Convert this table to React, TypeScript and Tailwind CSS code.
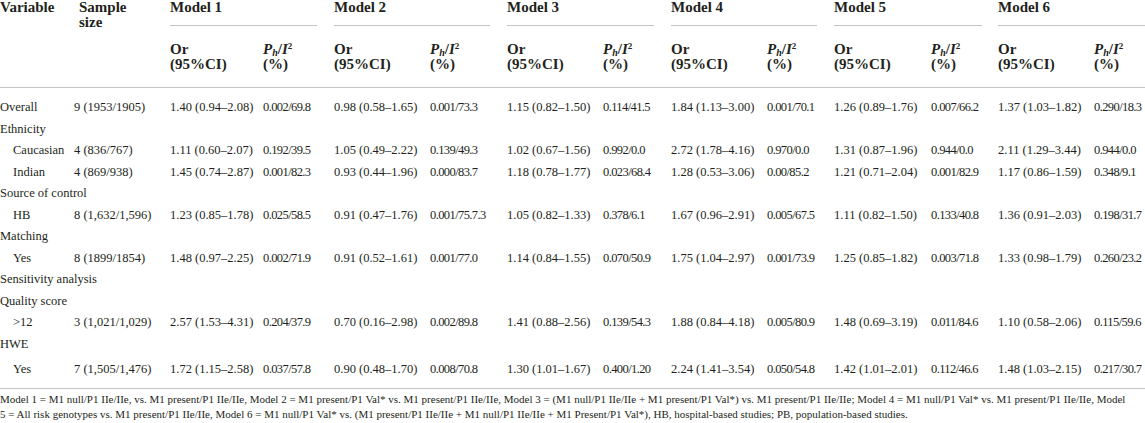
import React from 'react'

const cols = 'grid grid-cols-[74px_96px_93px_71px_96px_77px_96px_68px_96px_67px_97px_67px_96px_51px]'

type Row = {
  label: string
  indent?: boolean
  size?: string
  vals?: string[]
}

const rows: Row[] = [
  {
    label: 'Overall',
    size: '9 (1953/1905)',
    vals: ['1.40 (0.94–2.08)', '0.002/69.8', '0.98 (0.58–1.65)', '0.001/73.3', '1.15 (0.82–1.50)', '0.114/41.5', '1.84 (1.13–3.00)', '0.001/70.1', '1.26 (0.89–1.76)', '0.007/66.2', '1.37 (1.03–1.82)', '0.290/18.3'],
  },
  { label: 'Ethnicity' },
  {
    label: 'Caucasian',
    indent: true,
    size: '4 (836/767)',
    vals: ['1.11 (0.60–2.07)', '0.192/39.5', '1.05 (0.49–2.22)', '0.139/49.3', '1.02 (0.67–1.56)', '0.992/0.0', '2.72 (1.78–4.16)', '0.970/0.0', '1.31 (0.87–1.96)', '0.944/0.0', '2.11 (1.29–3.44)', '0.944/0.0'],
  },
  {
    label: 'Indian',
    indent: true,
    size: '4 (869/938)',
    vals: ['1.45 (0.74–2.87)', '0.001/82.3', '0.93 (0.44–1.96)', '0.000/83.7', '1.18 (0.78–1.77)', '0.023/68.4', '1.28 (0.53–3.06)', '0.00/85.2', '1.21 (0.71–2.04)', '0.001/82.9', '1.17 (0.86–1.59)', '0.348/9.1'],
  },
  { label: 'Source of control' },
  {
    label: 'HB',
    indent: true,
    size: '8 (1,632/1,596)',
    vals: ['1.23 (0.85–1.78)', '0.025/58.5', '0.91 (0.47–1.76)', '0.001/75.7.3', '1.05 (0.82–1.33)', '0.378/6.1', '1.67 (0.96–2.91)', '0.005/67.5', '1.11 (0.82–1.50)', '0.133/40.8', '1.36 (0.91–2.03)', '0.198/31.7'],
  },
  { label: 'Matching' },
  {
    label: 'Yes',
    indent: true,
    size: '8 (1899/1854)',
    vals: ['1.48 (0.97–2.25)', '0.002/71.9', '0.91 (0.52–1.61)', '0.001/77.0', '1.14 (0.84–1.55)', '0.070/50.9', '1.75 (1.04–2.97)', '0.001/73.9', '1.25 (0.85–1.82)', '0.003/71.8', '1.33 (0.98–1.79)', '0.260/23.2'],
  },
  { label: 'Sensitivity analysis' },
  { label: 'Quality score' },
  {
    label: '>12',
    indent: true,
    size: '3 (1,021/1,029)',
    vals: ['2.57 (1.53–4.31)', '0.204/37.9', '0.70 (0.16–2.98)', '0.002/89.8', '1.41 (0.88–2.56)', '0.139/54.3', '1.88 (0.84–4.18)', '0.005/80.9', '1.48 (0.69–3.19)', '0.011/84.6', '1.10 (0.58–2.06)', '0.115/59.6'],
  },
  { label: 'HWE' },
]

const lastRow: Row = {
  label: 'Yes',
  indent: true,
  size: '7 (1,505/1,476)',
  vals: ['1.72 (1.15–2.58)', '0.037/57.8', '0.90 (0.48–1.70)', '0.008/70.8', '1.30 (1.01–1.67)', '0.400/1.20', '2.24 (1.41–3.54)', '0.050/54.8', '1.42 (1.01–2.01)', '0.112/46.6', '1.48 (1.03–2.15)', '0.217/30.7'],
}

const models = [
  { name: 'Model 1', line: 'mr-[17px]' },
  { name: 'Model 2', line: 'mr-[17px]' },
  { name: 'Model 3', line: 'mr-[17px]' },
  { name: 'Model 4', line: 'mr-[17px]' },
  { name: 'Model 5', line: 'mr-[16px]' },
  { name: 'Model 6', line: '' },
]

function DataRow({ row, className = '' }: { row: Row; className?: string }) {
  if (!row.vals) {
    return (
      <div className={`h-[21.5px] leading-[21.5px] whitespace-nowrap ${className}`}>{row.label}</div>
    )
  }
  return (
    <div className={`${cols} h-[21.5px] leading-[21.5px] whitespace-nowrap ${className}`}>
      <div className={row.indent ? 'pl-[13px]' : ''}>{row.label}</div>
      <div>{row.size}</div>
      {row.vals.map((v, i) => (
        // Ph/I2 values sit a little tighter in the source face
        <div key={i} className={i % 2 === 1 ? 'tracking-[-0.6px]' : ''}>
          {v}
        </div>
      ))}
    </div>
  )
}

// P_h / I^2 header, kept on one line with small raised/lowered glyphs
function PhHeader() {
  return (
    <>
      <div className="whitespace-nowrap">
        <i>P</i>
        <span className="relative top-[2px] text-[10px] leading-none italic">h</span>/<i>I</i>
        <span className="relative -top-[5px] text-[9px] leading-none">2</span>
      </div>
      <div>(%)</div>
    </>
  )
}

export default function App() {
  return (
    <div className="w-[1145px] bg-white font-['Liberation_Serif','Times_New_Roman',serif] text-[#231f20]">
      {/* header */}
      <div className={`${cols} grid-rows-[27px_60px] border-b border-[#c4c4c4] text-[15px] font-bold leading-[15px]`}>
        <div className="row-span-2">Variable</div>
        <div className="row-span-2 pl-[5px]">
          Sample
          <br />
          size
        </div>
        {models.map((m) => (
          <div key={m.name} className="col-span-2">
            <div className={`h-[26px] border-b border-[#c4c4c4] ${m.line}`}>{m.name}</div>
          </div>
        ))}
        {models.map((m) => (
          <React.Fragment key={m.name}>
            <div className="pt-[15px]">
              Or
              <br />
              (95%CI)
            </div>
            <div className="pt-[15px]">
              <PhHeader />
            </div>
          </React.Fragment>
        ))}
      </div>

      {/* body */}
      <div className="border-b border-[#c4c4c4] pt-[9px] pb-[7px] text-[12.5px]">
        {rows.map((r, i) => (
          <DataRow key={i} row={r} />
        ))}
        <DataRow row={lastRow} className="mt-[4px]" />
      </div>

      <p className="pt-[3px] text-[11px] leading-[15px]">
        Model 1 = M1 null/P1 IIe/IIe, vs. M1 present/P1 IIe/IIe, Model 2 = M1 present/P1 Val* vs. M1 present/P1 IIe/IIe, Model 3 = (M1 null/P1 IIe/IIe + M1 present/P1 Val*) vs. M1 present/P1 IIe/IIe; Model 4 = M1 null/P1 Val* vs. M1 present/P1 IIe/IIe, Model
        <br />5 = All risk genotypes vs. M1 present/P1 IIe/IIe, Model 6 = M1 null/P1 Val* vs. (M1 present/P1 IIe/IIe + M1 null/P1 IIe/IIe + M1 Present/P1 Val*), HB, hospital-based studies; PB, population-based studies.
      </p>
    </div>
  )
}
